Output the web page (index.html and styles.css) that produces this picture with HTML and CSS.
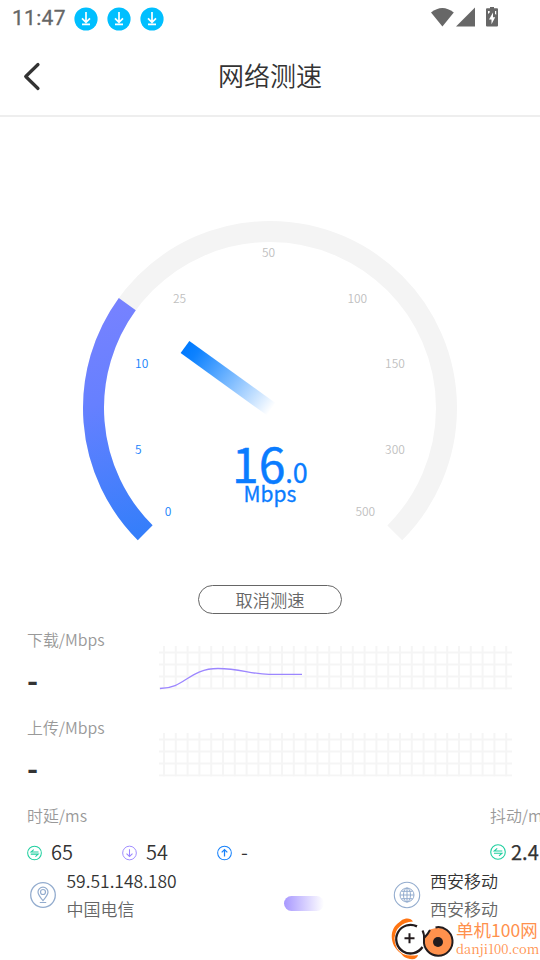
FILE: index.html
```html
<!DOCTYPE html>
<html lang="zh-CN">
<head>
<meta charset="utf-8">
<title>网络测速</title>
<link rel="stylesheet" href="styles.css">
</head>
<body>
<svg class="defs" width="0" height="0">
  <defs>
    <symbol id="download" viewBox="0 0 24 24">
      <circle cx="12" cy="12" r="11.6" fill="#00bfff"/>
      <path d="M12 5v10M8 11.3l4 4 4-4M8 17.400h8" fill="none" stroke="#fff" stroke-width="1.7"/>
    </symbol>
    <symbol id="swap" viewBox="0 0 16 16">
      <circle cx="8" cy="8" r="7.3" fill="none" stroke="#1fcf9f" stroke-width="1.1"/>
      <path d="M12.300 7H4.200l3-2.700M4 9.200h8l-3 2.700" fill="none" stroke="#1fcf9f" stroke-width="1.1"/>
    </symbol>
    <symbol id="down" viewBox="0 0 16 16">
      <circle cx="8" cy="8" r="7.3" fill="none" stroke="#9b86ff" stroke-width="1"/>
      <path d="M8 4v7.700M4.800 8.600l3.200 3.100 3.200-3.100" fill="none" stroke="#9b86ff" stroke-width="1.1"/>
    </symbol>
    <symbol id="up" viewBox="0 0 16 16">
      <circle cx="8" cy="8" r="7.3" fill="none" stroke="#1681fb" stroke-width="1.1"/>
      <path d="M8 11.7V4.5M5 7.3l3-2.9 3 2.9" fill="none" stroke="#1681fb" stroke-width="1.3"/>
    </symbol>
    <pattern id="cells" x="5" y="5.500" width="11.8" height="12" patternUnits="userSpaceOnUse">
      <path d="M1 0v12M0 1h11.8" fill="none" stroke="#f5f5f5" stroke-width="2"/>
    </pattern>
  </defs>
</svg>
<div class="status">
  <span class="clock">11:47</span>
  <svg class="dl"><use href="#download"/></svg>
  <svg class="dl"><use href="#download"/></svg>
  <svg class="dl"><use href="#download"/></svg>
  <svg class="signals" viewBox="0 0 70 22" fill="#676767">
    <path d="M1 5.5Q12.3-3.5 23.8 5.5L12.4 19.5z"/>
    <path d="M45 .5v19H26z"/>
    <path fill-rule="evenodd" d="M60 0h4v1.2h3q1 0 1 1V18.500q0 1-1 1H57q-1 0-1-1V2.200q0-1 1-1h3zM63 5.500l-4 7h2.500v4.800l3.700-7H63zM58 4v3l1.700-1.500V4zM65 4v3l1.200.8V4z"/>
  </svg>
</div>
<header class="header">
  <svg class="back" viewBox="0 0 20 30"><path d="M17 3.500L4.700 15.500 17 27.500" fill="none" stroke="#333" stroke-width="3.200" stroke-linecap="round" stroke-linejoin="round"/></svg>
  <h1>网络测速</h1>
</header>
<main>
  <svg class="gauge" viewBox="0 117 540 468">
    <defs>
      <linearGradient id="arc" gradientUnits="userSpaceOnUse" x1="98" y1="300" x2="165" y2="540">
        <stop offset="0" stop-color="#7882ff"/><stop offset=".4" stop-color="#6680ff"/><stop offset="1" stop-color="#307efa"/>
      </linearGradient>
      <linearGradient id="needle" gradientUnits="userSpaceOnUse" x1="185" y1="347" x2="271" y2="410">
        <stop offset="0" stop-color="#007aff"/><stop offset=".12" stop-color="#0e82ff"/><stop offset="1" stop-color="#007aff" stop-opacity="0"/>
      </linearGradient>
    </defs>
    <path d="M145.200 532.800A176.500 176.500 0 1 1 394.800 532.800" fill="none" stroke="#f4f4f4" stroke-width="21"/>
    <path d="M145.200 532.800A176.500 176.500 0 0 1 127.300 304.100" fill="none" stroke="url(#arc)" stroke-width="21"/>
    <path d="M185 347L271 409" stroke="url(#needle)" stroke-width="15"/>
    <g class="tick on"><text x="168" y="516">0</text><text x="138.300" y="454">5</text><text x="141.700" y="368">10</text></g>
    <g class="tick"><text x="179.500" y="303">25</text><text x="268.500" y="257">50</text><text x="357.300" y="303">100</text><text x="395" y="368">150</text><text x="395" y="454">300</text><text x="365.300" y="516">500</text></g>
    <text class="speed" x="232" y="483">16<tspan class="decimal">.0</tspan></text>
    <text class="unit" x="270" y="502">Mbps</text>
  </svg>
  <button class="cancel">取消测速</button>
  <section class="rate">
    <div><p class="label">下载/Mbps</p><p class="dash">-</p></div>
    <svg class="chart" viewBox="0 0 354 44">
      <rect x="1" width="353" height="43.500" fill="url(#cells)"/>
      <path d="M2 42.500C27 42.500 31 22.500 60 22.500C82 22.500 93 28.300 111 28.300H144" fill="none" stroke="#9c86ff" stroke-width="1.300"/>
    </svg>
  </section>
  <section class="rate">
    <div><p class="label">上传/Mbps</p><p class="dash">-</p></div>
    <svg class="chart second" viewBox="0 0 354 44"><rect x="1" width="353" height="43.500" fill="url(#cells)"/></svg>
  </section>
  <section class="timing">
    <div class="delay">
      <p class="label">时延/ms</p>
      <div class="values">
        <span><svg><use href="#swap"/></svg>65</span>
        <span><svg><use href="#down"/></svg>54</span>
        <span><svg><use href="#up"/></svg>-</span>
      </div>
    </div>
    <div class="jitter">
      <p class="label">抖动/ms</p>
      <div class="values"><span><svg><use href="#swap"/></svg><b>2.4</b></span></div>
    </div>
  </section>
  <section class="network">
    <svg class="node" viewBox="0 0 28 28" fill="none" stroke="#93acce">
      <circle cx="14" cy="14" r="12.300" stroke-width="1.300"/>
      <path d="M14 19.700C11.300 16.600 9 13.800 9 11.100a5 5 0 0 1 10 0c0 2.700-2.300 5.500-5 8.600zM10.800 21.500h6.400" stroke-width="1.200"/>
      <circle cx="14" cy="11" r="2.500" stroke-width="1.200"/>
    </svg>
    <div class="info local"><p class="ip">59.51.148.180</p><p class="sub">中国电信</p></div>
    <i class="beam"></i>
    <svg class="node" viewBox="0 0 28 28" fill="none" stroke="#93acce">
      <circle cx="14" cy="14" r="12.700" stroke-width="1.100"/>
      <circle cx="14" cy="14" r="7"/>
      <path d="M14 7v14M7 14h14M8.500 10.300h11M8.500 17.700h11"/><ellipse cx="14" cy="14" rx="3.500" ry="7"/>
    </svg>
    <div class="info"><p>西安移动</p><p class="sub">西安移动</p></div>
  </section>
</main>
<div class="brand">
  <svg viewBox="0 0 64 44" fill="none">
    <path d="M10 35.500C-2 27-2 11 8 4.500Q11 1 15 .5Q20 0 22 3.500Q5 5 3.500 20Q3.500 31 12 36Q18 38.500 27 37Q26 42 19 41Q13 40 10 35.500z" fill="#ff7412"/>
    <path d="M26 8.400A14.300 14.300 0 1 0 31.500 29" stroke="#231b1d" stroke-width="2.300"/>
    <path d="M47 9.500A14.300 14.300 0 1 1 33.500 19Q37 15 39 11.500z" fill="#ff914d"/>
    <path d="M31.500 12.500Q33.500 16 33 22A14.300 14.300 0 1 0 44.500 9.400M33.500 19.500Q37 16 39 12M13.500 20.300h10M18.500 15.300v10" stroke="#231b1d" stroke-width="2"/>
    <circle cx="47" cy="24" r="5" fill="#231b1d"/>
  </svg>
  <div><p class="name">单机100网</p><p class="site">danji100.com</p></div>
</div>
</body>
</html>
```

FILE: styles.css
```css
* { box-sizing: border-box; }
body {
  margin: 0; width: 540px; height: 960px; overflow: hidden; position: relative;
  background: #fff; color: #333; font-family: "Noto Sans CJK SC", sans-serif; font-weight: 350;
}
p, h1 { margin: 0; font-weight: inherit; }
svg { display: block; flex: none; }
.defs { position: absolute; }
.status { display: flex; align-items: center; height: 37px; padding: 0 40px 0 12px; }
.clock { font: 400 21px/37px Roboto, sans-serif; color: #666; width: 61.500px; white-space: nowrap; letter-spacing: .3px; -webkit-text-stroke: .3px #666; }
.dl { width: 24px; height: 24px; margin: 0 9px 0 0; }
.signals { width: 70px; height: 22px; margin: -2px 0 0 auto; }
.header { height: 80px; border-bottom: 2px solid #eee; display: flex; align-items: center; padding-left: 21px; }
.back { width: 20px; height: 30px; margin-top: -1px; }
h1 { flex: 1; text-align: center; margin: -3px 41px 0 0; font-size: 26px; line-height: 38px; }
.gauge { width: 540px; height: 468px; }
.tick { font-size: 12px; fill: #bfbfbf; text-anchor: middle; }
.tick.on { fill: #1681fb; }
.speed { font-size: 48px; font-weight: 400; fill: #0a7cff; stroke: #0a7cff; stroke-width: .5px; }
.decimal { font-size: 27px; stroke-width: .3px; }
.unit { font-size: 21px; font-weight: 400; fill: #0a7cff; stroke: #0a7cff; stroke-width: .3px; text-anchor: middle; }
.cancel {
  display: block; margin: 0 auto; width: 144px; height: 29px; padding: 0; border: 1px solid #666;
  border-radius: 15px; background: #fff; color: #666; font: 350 17.3px/27px "Noto Sans CJK SC", sans-serif;
}
.rate { display: flex; height: 88px; padding: 14px 0 0 27px; }
.rate > div { width: 131px; }
.label { font-size: 15.9px; line-height: 24px; color: #999; white-space: nowrap; }
.dash { font-size: 30px; line-height: 44px; margin-top: 5px; font-weight: 700; }
.chart { width: 354px; height: 44px; margin-top: 18px; }
.second { margin-top: 17px; }
.timing { display: flex; width: 540px; padding: 14px 0 0 27px; height: 78px; overflow: hidden; }
.delay { flex: none; width: 463px; }
.values { display: flex; margin-top: 9px; font-size: 20px; line-height: 30px; }
.values span { display: flex; align-items: center; flex: none; width: 95px; }
.values svg { width: 15px; height: 16px; margin: 1px 9px 0 0; }
.values b { font-weight: 400; -webkit-text-stroke: .25px #333; }
.jitter { flex: none; width: 50px; }
.jitter .values svg { width: 16px; margin: -1px 5px 0 0; }
.network { display: flex; height: 60px; padding: 0 0 0 29px; }
.node { width: 28px; height: 28px; margin-top: 13px; }
.info { margin-left: 9.500px; font-size: 17px; line-height: 28px; white-space: nowrap; margin-top: -1px; }
.local { width: 217px; }
.ip { font-size: 17.500px; }
.sub { color: #666; }
.beam { width: 40px; height: 15px; border-radius: 8px; margin: 28px 69px 0 0; background: linear-gradient(90deg, #a898ff, #fff); }
.brand { position: absolute; left: 391px; top: 918px; display: flex; color: #ff914d; white-space: nowrap; font-weight: 400; }
.brand svg { width: 64px; height: 44px; }
.name { font-size: 17.500px; line-height: 24px; margin-left: 1px; }
.site { font: 12.900px/14px "Noto Serif CJK SC", "Liberation Serif", serif; margin: 0 0 0 1px; }
```
